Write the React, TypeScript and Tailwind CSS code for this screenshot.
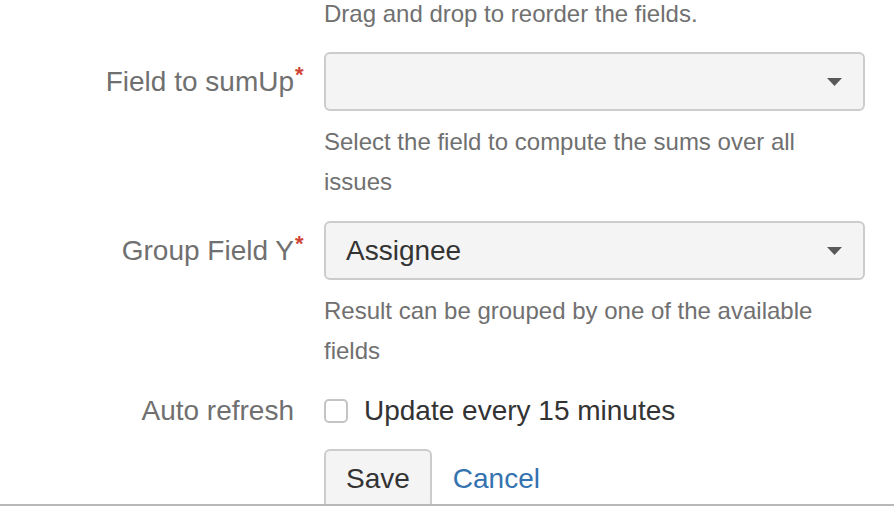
function Caret() {
  return (
    <svg width="15" height="8" viewBox="0 0 15 8" className="shrink-0">
      <path d="M0 0 L15 0 L7.5 8 Z" fill="#595959" />
    </svg>
  );
}

function Label({ text, required }: { text: string; required?: boolean }) {
  return (
    <div className="text-right text-[28px] leading-[32px] text-[#707070]">
      <span className="relative inline-block">
        {text}
        {required && (
          <span className="absolute left-full top-[-2px] ml-[1px] text-[22px] font-bold leading-none text-[#d04437]">*</span>
        )}
      </span>
    </div>
  );
}

function Select({ value }: { value?: string }) {
  return (
    <div className="flex h-[59px] items-center justify-between rounded-[6px] border-2 border-[#cccccc] bg-[#f4f4f4] pl-[20px] pr-[21px]">
      <span className="text-[28px] text-[#333333]">{value ?? ""}</span>
      <Caret />
    </div>
  );
}

function Help({ children }: { children: React.ReactNode }) {
  return <div className="col-start-2 text-[24px] leading-[40px] text-[#707070]">{children}</div>;
}

export default function App() {
  return (
    <div className="flex h-[510px] w-[894px] flex-col overflow-hidden bg-white font-['Liberation_Sans',Arial,sans-serif]">
      <div className="flex-1 overflow-hidden">
        <div className="mt-[-6px] grid grid-cols-[294px_541px] items-center gap-x-[30px]">
          <Help>Drag and drop to reorder the fields.</Help>

          <div className="col-span-2 h-[18px]" />
          <Label text="Field to sumUp" required />
          <Select />
          <div className="col-span-2 h-[11px]" />
          <Help>Select the field to compute the sums over all issues</Help>

          <div className="col-span-2 h-[19px]" />
          <Label text="Group Field Y" required />
          <Select value="Assignee" />
          <div className="col-span-2 h-[11px]" />
          <Help>Result can be grouped by one of the available fields</Help>

          <div className="col-span-2 h-[20px]" />
          <Label text="Auto refresh" />
          <label className="flex h-[40px] items-center gap-[16px]">
            <span className="h-[24px] w-[24px] rounded-[5px] border-2 border-[#c4c4c4] bg-white" />
            <span className="text-[28px] text-[#333333]">Update every 15 minutes</span>
          </label>

          <div className="col-span-2 h-[18px]" />
          <div />
          <div className="flex items-center gap-[21px]">
            <button className="h-[60px] rounded-[6px] border-2 border-[#cccccc] bg-[#f4f4f4] px-[20px] text-[28px] text-[#333333]">
              Save
            </button>
            <a className="text-[28px] text-[#3572b0]" href="#">
              Cancel
            </a>
          </div>
        </div>
      </div>
      <div className="h-[6px] shrink-0 border-t-2 border-[#b8b8b8] bg-white" />
    </div>
  );
}
